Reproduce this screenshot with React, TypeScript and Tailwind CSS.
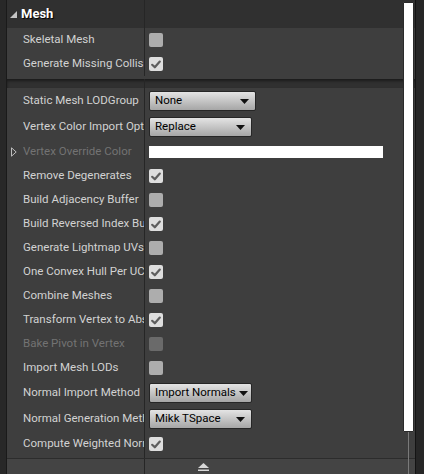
import React from 'react'

type Row =
  | { label: string; kind: 'check'; checked?: boolean; disabled?: boolean }
  | { label: string; kind: 'combo'; value: string; w: string }
  | { label: string; kind: 'color'; disabled?: boolean }

const group1: Row[] = [
  { label: 'Skeletal Mesh', kind: 'check' },
  { label: 'Generate Missing Collision', kind: 'check', checked: true },
]

const group2: Row[] = [
  { label: 'Static Mesh LODGroup', kind: 'combo', value: 'None', w: 'w-[107px]' },
  { label: 'Vertex Color Import Option', kind: 'combo', value: 'Replace', w: 'w-[103px]' },
  { label: 'Vertex Override Color', kind: 'color', disabled: true },
  { label: 'Remove Degenerates', kind: 'check', checked: true },
  { label: 'Build Adjacency Buffer', kind: 'check' },
  { label: 'Build Reversed Index Buffer', kind: 'check', checked: true },
  { label: 'Generate Lightmap UVs', kind: 'check' },
  { label: 'One Convex Hull Per UCX', kind: 'check', checked: true },
  { label: 'Combine Meshes', kind: 'check' },
  { label: 'Transform Vertex to Absolute', kind: 'check', checked: true },
  { label: 'Bake Pivot in Vertex', kind: 'check', disabled: true },
  { label: 'Import Mesh LODs', kind: 'check' },
  { label: 'Normal Import Method', kind: 'combo', value: 'Import Normals', w: 'w-[103px]' },
  { label: 'Normal Generation Method', kind: 'combo', value: 'Mikk TSpace', w: 'w-[103px]' },
  { label: 'Compute Weighted Normals', kind: 'check', checked: true },
]

function Checkbox({ checked, disabled }: { checked?: boolean; disabled?: boolean }) {
  const bg = disabled ? 'bg-[#6a6a6a]' : checked ? 'bg-[#dedede]' : 'bg-[#adadad]'
  return (
    <div className={`w-[14px] h-[14px] rounded-[2px] flex items-center justify-center ${bg}`}>
      {checked && (
        <svg width="10" height="9" viewBox="0 0 10 9">
          <path d="M1.2 4.8 L3.8 7.3 L8.8 1.6" fill="none" stroke="#5e5e5e" strokeWidth="2.2" strokeLinecap="round" strokeLinejoin="round" />
        </svg>
      )}
    </div>
  )
}

function Combo({ value, w }: { value: string; w: string }) {
  return (
    <div className={`${w} h-[20px] rounded-[2px] border border-[#262626] bg-gradient-to-b from-[#e4e4e4] to-[#a6a6a6] flex items-center justify-between pl-[5px] pr-[6px] text-[11.5px] text-black`}>
      <span className="whitespace-nowrap">{value}</span>
      <svg className="shrink-0 ml-[3px]" width="9" height="5" viewBox="0 0 9 5">
        <path d="M0 0 H9 L4.5 5 Z" fill="#111" />
      </svg>
    </div>
  )
}

function PropRow({ row }: { row: Row }) {
  const tall = row.kind === 'combo'
  const disabled = 'disabled' in row && row.disabled
  return (
    <div className={`flex ${tall ? 'h-[26px]' : 'h-[24px]'}`}>
      <div className="relative w-[138px] shrink-0 border-r border-[#262626] flex items-center pl-[16px] overflow-hidden">
        {row.kind === 'color' && (
          <svg className="absolute left-[4px] top-[7px]" width="6" height="10" viewBox="0 0 6 10">
            <path d="M0.5 0.8 L5.2 5 L0.5 9.2 Z" fill="none" stroke="#bdbdbd" strokeWidth="1" />
          </svg>
        )}
        <span className={`min-w-0 overflow-hidden whitespace-nowrap text-[11.5px] ${disabled ? 'text-[#737373]' : 'text-[#d2d2d2]'}`}>{row.label}</span>
      </div>
      <div className="flex items-center pl-[4px]">
        {row.kind === 'check' && <Checkbox checked={row.checked} disabled={row.disabled} />}
        {row.kind === 'combo' && <Combo value={row.value} w={row.w} />}
        {row.kind === 'color' && <div className="w-[234px] h-[12px] bg-white" />}
      </div>
    </div>
  )
}

export default function App() {
  return (
    <div className="w-[424px] h-[474px] flex bg-[#1e1e1e] overflow-hidden" style={{ fontFamily: 'Roboto, "Noto Sans", sans-serif' }}>
      <div className="w-[7px] shrink-0 bg-[#282828] border-r border-[#1a1a1a]" />

      <div className="relative w-[408px] shrink-0 flex flex-col bg-[#2f2f2f]">
        {/* header */}
        <div className="flex h-[28px] shrink-0 bg-[#303030]">
          <div className="w-[138px] border-r border-[#262626] flex items-center pl-[3px] gap-[4px]">
            <svg width="7" height="7" viewBox="0 0 7 7">
              <path d="M7 0 V7 H0 Z" fill="#c4c4c4" />
            </svg>
            <span className="text-[13px] font-bold text-white" style={{ textShadow: '1px 1px 1px #000' }}>Mesh</span>
          </div>
        </div>

        {/* first group */}
        <div className="bg-[#3e3e3e] pb-[3px] shrink-0">
          {group1.map(r => <PropRow key={r.label} row={r} />)}
        </div>

        {/* gap */}
        <div className="flex h-[9px] shrink-0 bg-[#303030] shadow-[inset_0_2px_3px_rgba(0,0,0,0.45)]">
          <div className="w-[138px] border-r border-[#262626]" />
        </div>

        {/* second group */}
        <div className="bg-[#3e3e3e] flex-1 flex flex-col">
          {group2.map(r => <PropRow key={r.label} row={r} />)}
          <div className="flex flex-1">
            <div className="w-[138px] border-r border-[#262626]" />
          </div>
        </div>

        {/* bottom bar */}
        <div className="flex h-[16px] shrink-0 bg-[#444444] border-t border-[#2c2c2c]">
          <div className="w-[138px] border-r border-[#262626]" />
          <div className="flex items-center pl-[53px]">
            <svg width="11" height="8" viewBox="0 0 11 8">
              <path d="M5.5 0 L11 5 H0 Z" fill="#d8d8d8" />
              <rect x="0" y="6.5" width="11" height="1.5" fill="#d8d8d8" />
            </svg>
          </div>
        </div>

        {/* scrollbar */}
        <div className="absolute right-[1px] top-0 bottom-0 w-[11px] flex flex-col items-center">
          <div className="mt-[2px] w-[11px] h-[430px] bg-white border border-[#2a2a2a] rounded-[1px]" />
          <div className="flex-1 w-px bg-[#7a7a7a]" />
        </div>
      </div>

      <div className="flex-1 bg-[#262626] border-l border-[#141414]" />
    </div>
  )
}
